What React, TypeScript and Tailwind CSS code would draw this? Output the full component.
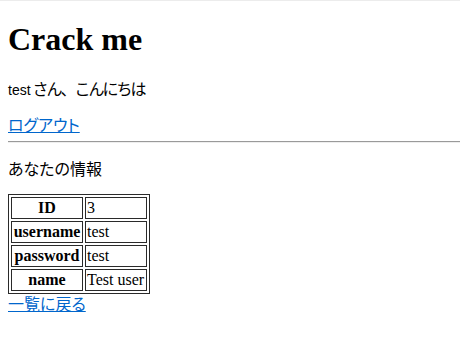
const jp = '"Noto Sans CJK JP", sans-serif';

const rows: [string, string][] = [
  ["ID", "3"],
  ["username", "test"],
  ["password", "test"],
  ["name", "Test user"],
];

export default function App() {
  return (
    <div className="min-h-[344px] w-[460px] bg-white text-black font-['Liberation_Serif',serif] text-[16px]">
      <div className="h-px bg-[#ececec]" />
      <div className="pl-2">
        <h1 className="mt-[20px] mb-[21px] text-[32px] leading-[37px] font-bold">Crack me</h1>
        <p className="mb-4 flex items-baseline leading-[18px]">
          <span className="font-['Liberation_Sans',sans-serif] text-[14px]">test</span>
          <span className="ml-[2px] tracking-[-2px]" style={{ fontFamily: jp }}>
            さん、こんにちは
          </span>
        </p>
        <a
          href="#"
          className="block w-fit leading-[18px] text-[#0066cc] underline [font-feature-settings:'palt']"
          style={{ fontFamily: jp }}
        >
          ログアウト
        </a>
        <hr className="mt-2 mb-4 border-t border-b border-[#9a9a9a] border-b-[#eeeeee]" />
        <p className="mb-[17px] leading-[18px] [font-feature-settings:'palt']" style={{ fontFamily: jp }}>
          あなたの情報
        </p>
        <table className="border border-[#2a2a2a] border-separate border-spacing-[2px]">
          <tbody>
            {rows.map(([k, v]) => (
              <tr key={k}>
                <th className="w-[72px] border border-[#2a2a2a] p-px text-center font-bold leading-[18px]">
                  {k}
                </th>
                <td className="w-[62px] border border-[#2a2a2a] p-px text-left leading-[18px]">{v}</td>
              </tr>
            ))}
          </tbody>
        </table>
        <a
          href="#"
          className="block w-fit leading-[18px] text-[#0066cc] underline [font-feature-settings:'palt']"
          style={{ fontFamily: jp }}
        >
          一覧に戻る
        </a>
      </div>
    </div>
  );
}
